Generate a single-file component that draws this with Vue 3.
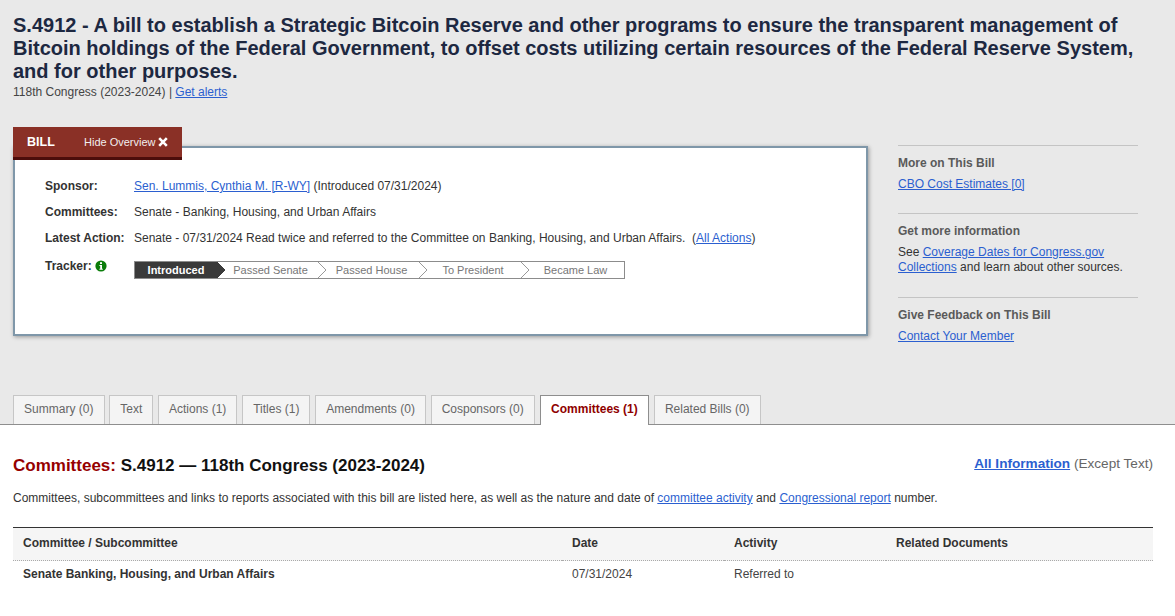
<template>
  <div class="page">
    <header class="bill-head">
      <h1>S.4912 - A bill to establish a Strategic Bitcoin Reserve and other programs to ensure the transparent management of Bitcoin holdings of the Federal Government, to offset costs utilizing certain resources of the Federal Reserve System, and for other purposes.</h1>
      <p class="congress">118th Congress (2023-2024) | <a href="#">Get alerts</a></p>

      <div class="overview-row">
        <section class="overview">
          <div class="overview-tab">
            <span class="tab-bill">BILL</span>
            <span class="tab-hide">Hide Overview<svg class="tab-x" width="10" height="10" viewBox="0 0 10 10"><path d="M1.2 1.2l7.6 7.6M8.8 1.2l-7.6 7.6" stroke="#fff" stroke-width="2.6" fill="none" /></svg></span>
          </div>
          <div class="overview-card">
            <div class="ov-row"><b>Sponsor:</b><span><a href="#">Sen. Lummis, Cynthia M. [R-WY]</a> (Introduced 07/31/2024)</span></div>
            <div class="ov-row"><b>Committees:</b><span>Senate - Banking, Housing, and Urban Affairs</span></div>
            <div class="ov-row"><b>Latest Action:</b><span>Senate - 07/31/2024 Read twice and referred to the Committee on Banking, Housing, and Urban Affairs.&nbsp; (<a href="#">All Actions</a>)</span></div>
            <div class="ov-row tracker-row">
              <b class="tracker-label">Tracker:
                <svg class="info" width="12" height="12" viewBox="0 0 12 12"><circle cx="6" cy="6" r="5.6" fill="#0a7d0a" /><rect x="5" y="2.2" width="2" height="1.8" fill="#fff" /><path d="M4.4 5h2.6v3.8h.8v1H4.4v-1h.8V6h-.8z" fill="#fff" /></svg>
              </b>
              <ol class="tracker">
                <li v-for="(s, i) in steps" :key="s.label" class="step" :class="{ active: i === 0 }" :style="{ width: s.width + 'px' }">
                  {{ s.label }}
                  <svg v-if="i < steps.length - 1" class="chev" width="10" height="18" viewBox="0 0 10 18">
                    <path d="M0 0L9 9L0 18" :fill="i === 0 ? '#3a3a3a' : '#fff'" :stroke="i === 0 ? '#3a3a3a' : '#999'" />
                  </svg>
                </li>
              </ol>
            </div>
          </div>
        </section>

        <aside class="side">
          <div v-for="b in sideBlocks" :key="b.title" class="side-block" :class="b.cls">
            <h3>{{ b.title }}</h3>
            <p v-if="b.cls === 'info-block'">See <a href="#">Coverage Dates for Congress.gov Collections</a> and learn about other sources.</p>
            <p v-else><a href="#">{{ b.link }}</a></p>
          </div>
        </aside>
      </div>

      <nav class="tabs">
        <a v-for="t in tabs" :key="t" href="#" class="tab" :class="{ selected: t === 'Committees (1)' }">{{ t }}</a>
      </nav>
    </header>

    <main class="content">
      <div class="content-head">
        <h2><span class="red">Committees:</span> S.4912 — 118th Congress (2023-2024)</h2>
        <div class="all-info"><a href="#">All Information</a> (Except Text)</div>
      </div>
      <p class="lead">Committees, subcommittees and links to reports associated with this bill are listed here, as well as the nature and date of <a href="#">committee activity</a> and <a href="#">Congressional report</a> number.</p>

      <table>
        <thead>
          <tr><th class="c1">Committee / Subcommittee</th><th class="c2">Date</th><th class="c3">Activity</th><th>Related Documents</th></tr>
        </thead>
        <tbody>
          <tr><td class="name">Senate Banking, Housing, and Urban Affairs</td><td>07/31/2024</td><td>Referred to</td><td></td></tr>
        </tbody>
      </table>
    </main>
  </div>
</template>

<script setup>
const steps = [
  { label: 'Introduced', width: 82 },
  { label: 'Passed Senate', width: 101 },
  { label: 'Passed House', width: 101 },
  { label: 'To President', width: 102 },
  { label: 'Became Law', width: 103 },
]

const sideBlocks = [
  { title: 'More on This Bill', link: 'CBO Cost Estimates [0]', cls: 'more-block' },
  { title: 'Get more information', cls: 'info-block' },
  { title: 'Give Feedback on This Bill', link: 'Contact Your Member', cls: 'feedback-block' },
]

const tabs = ['Summary (0)', 'Text', 'Actions (1)', 'Titles (1)', 'Amendments (0)', 'Cosponsors (0)', 'Committees (1)', 'Related Bills (0)']
</script>

<style>
html, body { margin: 0; background: #fff; overflow: hidden; }
</style>

<style scoped>
.page { font-family: "Liberation Sans", Arial, sans-serif; font-size: 12px; color: #333; }
a { color: #2b5fd0; text-decoration: underline; }
h1, h2, h3, p { margin: 0; }

.bill-head { background: #e9e9e9; padding: 14px 0 0 13px; height: 410px; border-bottom: 1px solid #8e8e8e; }
h1 { font-size: 20px; line-height: 23px; color: #1d2841; width: 1135px; }
.congress { margin-top: 2px; line-height: 14px; color: #444; }

.overview-row { display: flex; margin-top: 28px; height: 268px; }
.overview { position: relative; width: 855px; padding-top: 19px; flex: none; }
.overview-tab { position: absolute; top: 0; left: 0; z-index: 2; width: 169px; height: 30px; background: #8a3026; border-bottom: 3px solid #4d0d0b; color: #fff; display: flex; align-items: center; }
.tab-bill { font-size: 12.5px; font-weight: bold; margin-left: 14px; width: 57px; }
.tab-hide { font-size: 11px; display: flex; align-items: center; gap: 2px; color: #f2eeee; }
.tab-x { margin-top: -1px; }
.overview-card { background: #fff; border: 2px solid #7f97a9; box-shadow: 1px 1px 4px rgba(0, 0, 0, 0.35); padding: 31px 0 0 30px; height: 155px; }
.ov-row { display: flex; height: 26px; line-height: 14px; align-items: flex-start; }
.ov-row b { width: 89px; flex: none; color: #333; }
.tracker-row { margin-top: 4px; }
.tracker-label { display: flex; align-items: center; gap: 3px; margin-top: -2px; }
.tracker { list-style: none; margin: 0; padding: 0; display: flex; height: 18px; box-sizing: border-box; border: 1px solid #8c8c8c; width: 491px; overflow: hidden; }
.step { position: relative; flex: none; font-size: 11px; color: #777; line-height: 16px; text-align: center; padding-left: 6px; box-sizing: border-box; white-space: nowrap; }
.step.active { background: #3a3a3a; color: #fff; font-weight: bold; padding-left: 0; }
.chev { position: absolute; right: -9px; top: -1px; z-index: 1; }

.side { margin-left: 30px; width: 240px; flex: none; margin-top: 18px; }
.side-block { border-top: 1px solid #c4c4c4; padding-top: 10px; color: #333; }
.side-block h3 { font-size: 12px; line-height: 14px; color: #5a5a5a; }
.side-block p { margin-top: 7px; line-height: 15px; }
.more-block { height: 57px; }
.info-block { height: 73px; }

.tabs { display: flex; gap: 4.6px; height: 30px; }
.tab { height: 29px; box-sizing: border-box; border: 1px solid #c6c6c6; border-bottom: 0; background: #f4f4f4; color: #666; text-decoration: none; padding: 0 10.1px; line-height: 27px; }
.tab.selected { background: #fff; color: #8f0000; font-weight: bold; height: 30px; position: relative; z-index: 1; border-color: #8e8e8e; margin: 0 0.4px 0 0.6px; }

.content { background: #fff; padding: 0 22px 0 13px; }
.content-head { display: flex; justify-content: space-between; align-items: flex-start; padding-top: 31px; }
h2 { font-size: 17px; line-height: 20px; color: #111; }
.red { color: #960000; }
.all-info { font-size: 13.6px; line-height: 16px; color: #666; }
.all-info a { font-weight: bold; color: #2b5fd0; }
.lead { margin-top: 15px; font-size: 12px; line-height: 14px; color: #333; }

table { width: 100%; margin-top: 22px; border-collapse: collapse; border-top: 1px solid #333; table-layout: fixed; }
th { background: #f5f5f5; text-align: left; font-size: 12px; height: 33px; padding: 0 0 2px 10px; border-bottom: 1px dotted #aaa; color: #333; box-sizing: border-box; }
td { padding: 6px 0 0 10px; height: 14px; line-height: 14px; color: #444; }
.c1 { width: 549px; }
.c2 { width: 162px; }
.c3 { width: 162px; }
td.name { font-weight: bold; color: #333; }
</style>
